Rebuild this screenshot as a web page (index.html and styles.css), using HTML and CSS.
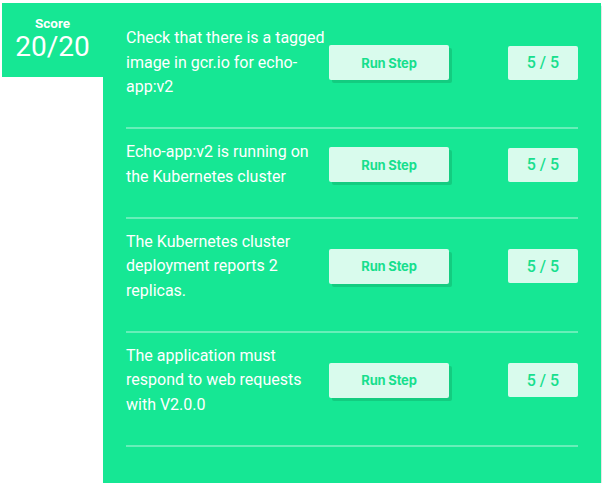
FILE: index.html
```html
<!DOCTYPE html>
<html lang="en">
<head>
<meta charset="utf-8">
<title>Score</title>
<link rel="stylesheet" href="styles.css">
</head>
<body>
<div class="layout">
  <div class="score-box">
    <div class="score-label">Score</div>
    <div class="score-value">20/20</div>
  </div>
  <div class="panel">
    <div class="row">
      <div class="row-text">Check that there is a tagged image in gcr.io for echo-app:v2</div>
      <button class="run-btn">Run Step</button>
      <div class="points">5 / 5</div>
    </div>
    <div class="row">
      <div class="row-text">Echo-app:v2 is running on the Kubernetes cluster</div>
      <button class="run-btn">Run Step</button>
      <div class="points">5 / 5</div>
    </div>
    <div class="row">
      <div class="row-text">The Kubernetes cluster deployment reports 2 replicas.</div>
      <button class="run-btn">Run Step</button>
      <div class="points">5 / 5</div>
    </div>
    <div class="row">
      <div class="row-text">The application must respond to web requests with V2.0.0</div>
      <button class="run-btn">Run Step</button>
      <div class="points">5 / 5</div>
    </div>
  </div>
</div>
</body>
</html>
```

FILE: styles.css
```css
html, body {
  margin: 0;
  padding: 0;
  background: #ffffff;
}

body {
  font-family: Roboto, "Liberation Sans", sans-serif;
  color: #ffffff;
}

.layout {
  display: flex;
  align-items: flex-start;
  padding: 3px 0 0 2px;
  width: 599px;
}

.score-box {
  flex: 0 0 101px;
  height: 74px;
  background: #16e794;
  text-align: center;
  padding-top: 12px;
  box-sizing: border-box;
}

.score-label {
  font-size: 13.5px;
  font-weight: 700;
  line-height: 16px;
}

.score-value {
  font-size: 28px;
  font-weight: 400;
  line-height: 30px;
  margin-top: 1px;
}

.panel {
  flex: 0 0 498px;
  height: 480px;
  box-sizing: border-box;
  background: #16e794;
  padding: 12px 23px 0 23px;
  box-shadow: 2px 3px 1px rgba(0, 0, 0, 0.1);
}

.row {
  display: flex;
  align-items: center;
  padding: 11px 0 27.5px 0;
  border-bottom: 2px solid rgba(255, 255, 255, 0.35);
}

.row-text {
  flex: 0 0 200px;
  margin-right: 3px;
  font-size: 16px;
  line-height: 24.5px;
}

.run-btn {
  flex: 0 0 120px;
  height: 35px;
  border: none;
  border-radius: 2px;
  background: #d9fbed;
  color: #17df8d;
  font-family: Inter, "Open Sans", sans-serif;
  font-weight: 700;
  font-size: 13px;
  letter-spacing: -0.2px;
  box-shadow: 3px 3px 0 #13cc80;
  padding: 0;
  cursor: pointer;
}

.points {
  margin-left: auto;
  width: 70px;
  height: 34px;
  border-radius: 2px;
  background: #d9fbed;
  color: #17df8d;
  font-size: 16px;
  font-weight: 500;
  display: flex;
  align-items: center;
  justify-content: center;
}
```
